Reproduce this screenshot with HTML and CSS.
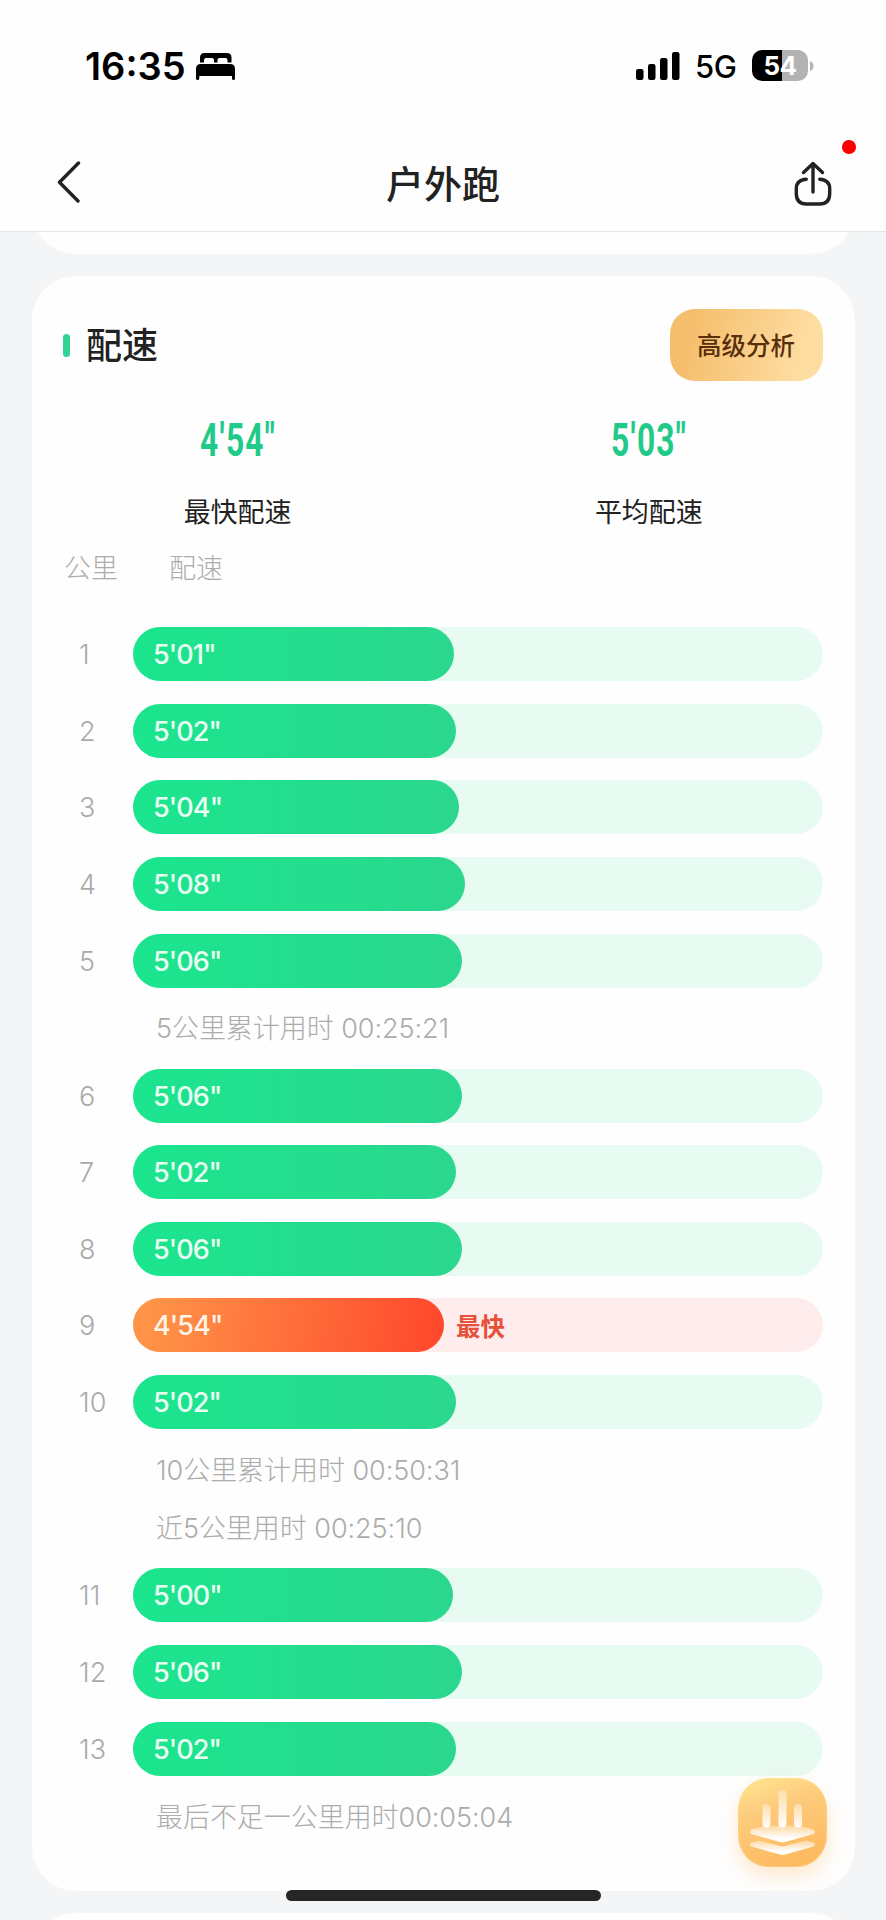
FILE: index.html
```html
<!DOCTYPE html>
<html lang="zh-CN">
<head>
<meta charset="utf-8">
<title>户外跑</title>
<link rel="stylesheet" href="styles.css">
</head>
<body>
<div class="screen">
  <header class="top">
    <div class="status">
      <span class="time">16:35</span>
      <svg class="bed" viewBox="0 0 39 27" width="39" height="27"><path d="M4 9.500V4.500Q4 0 8.500 0H31Q35.500 0 35.500 4.500V9.500H31.500V7Q31.500 5 29.500 5H23.500Q21.500 5 21.500 7V9.500H18V7Q18 5 16 5H10Q8 5 8 7V9.500Z"/><path d="M5 11H34Q39 11 39 16V25.500Q39 27 37.500 27Q36 27 36 25.500V23H3.300V25.500Q3.300 27 1.700 27Q0 27 0 25.500V16Q0 11 5 11Z"/></svg>
      <svg class="signal" viewBox="0 0 44 28" width="44" height="28"><rect x="0" y="17" width="7.500" height="11" rx="2.200"/><rect x="12" y="12" width="7.500" height="16" rx="2.200"/><rect x="24" y="6" width="7.500" height="22" rx="2.200"/><rect x="36" y="0" width="7.500" height="28" rx="2.200"/></svg>
      <span class="net">5G</span>
      <span class="battery">54</span>
      <svg class="nub" viewBox="0 0 4 10" width="4" height="10"><path d="M0 0Q3.500 1.500 3.500 5T0 10Z"/></svg>
    </div>
    <nav class="nav">
      <svg class="back" viewBox="0 0 24 42" width="24" height="42"><path d="M21.500 2L2.500 21.200L21 40"/></svg>
      <h1 class="title">户外跑</h1>
      <div class="share">
        <svg viewBox="0 0 38 46" width="38" height="46"><path d="M19 31V3M9.500 11.500L19 2.500L28.500 11.500M12.300 18.200C6 18.700 2.300 22 2.300 27.500V32.500Q2.300 43 12.500 43H25.500Q35.700 43 35.700 32.500V27.500C35.700 22 32 18.700 25.700 18.200"/></svg>
        <i class="dot"></i>
      </div>
    </nav>
  </header>
  <main class="content">
    <section class="card previous"></section>
    <section class="card pace">
      <div class="head">
        <i class="mark"></i><h2 class="heading">配速</h2><button class="analysis">高级分析</button>
      </div>
      <div class="stats">
        <div class="stat"><b class="value">4'54"</b><span class="label">最快配速</span></div>
        <div class="stat"><b class="value">5'03"</b><span class="label">平均配速</span></div>
      </div>
      <div class="columns"><span class="km">公里</span><span>配速</span></div>
      <div class="list">
        <div class="row"><span class="num">1</span><div class="track"><div class="fill" style="width:321.5px">5'01"</div></div></div>
        <div class="row"><span class="num">2</span><div class="track"><div class="fill" style="width:323px">5'02"</div></div></div>
        <div class="row"><span class="num">3</span><div class="track"><div class="fill" style="width:326px">5'04"</div></div></div>
        <div class="row"><span class="num">4</span><div class="track"><div class="fill" style="width:332px">5'08"</div></div></div>
        <div class="row"><span class="num">5</span><div class="track"><div class="fill" style="width:329px">5'06"</div></div></div>
        <p class="note">5公里累计用时 00:25:21</p>
        <div class="row"><span class="num">6</span><div class="track"><div class="fill" style="width:329px">5'06"</div></div></div>
        <div class="row"><span class="num">7</span><div class="track"><div class="fill" style="width:323px">5'02"</div></div></div>
        <div class="row"><span class="num">8</span><div class="track"><div class="fill" style="width:329px">5'06"</div></div></div>
        <div class="row fastest"><span class="num">9</span><div class="track"><div class="fill" style="width:311px">4'54"</div><span class="tag">最快</span></div></div>
        <div class="row"><span class="num">10</span><div class="track"><div class="fill" style="width:323px">5'02"</div></div></div>
        <p class="note">10公里累计用时 00:50:31</p>
        <p class="note">近5公里用时 00:25:10</p>
        <div class="row"><span class="num">11</span><div class="track"><div class="fill" style="width:320px">5'00"</div></div></div>
        <div class="row"><span class="num">12</span><div class="track"><div class="fill" style="width:329px">5'06"</div></div></div>
        <div class="row"><span class="num">13</span><div class="track"><div class="fill" style="width:323px">5'02"</div></div></div>
        <p class="note">最后不足一公里用时00:05:04</p>
      </div>
    </section>
    <section class="card next"></section>
  </main>
  <div class="fab">
    <svg viewBox="0 0 89 89" width="89" height="89">
      <defs>
        <linearGradient id="stick" x1="0" y1="0" x2="0" y2="1"><stop offset="0" stop-color="#fff" stop-opacity=".35"/><stop offset="1" stop-color="#fff"/></linearGradient>
        <linearGradient id="layer" x1="0" y1="0" x2="0" y2="1"><stop offset="0" stop-color="#fff" stop-opacity=".35"/><stop offset=".75" stop-color="#fff"/></linearGradient>
      </defs>
      <path fill="url(#layer)" d="M13.500 64.500L21 62.500L42 68Q44.500 68.700 47 68L68 62.500L75.500 64.500Q78.500 66.500 75.500 68.500L47 76.500Q44.500 77.300 42 76.500L13.500 68.500Q10.500 66.500 13.500 64.500Z"/>
      <path fill="url(#layer)" d="M13.500 51.500L26 48H63L75.500 51.500Q78.500 54 75.500 56L47 64Q44.500 64.800 42 64L13.500 56Q10.500 54 13.500 51.500Z"/>
      <rect x="24.500" y="26" width="8" height="23.500" rx="4" fill="url(#stick)"/>
      <rect x="40.500" y="12" width="8" height="37.500" rx="4" fill="url(#stick)"/>
      <rect x="56" y="26" width="8" height="23.500" rx="4" fill="url(#stick)"/>
    </svg>
  </div>
  <div class="home"></div>
</div>
</body>
</html>
```
FILE: styles.css
```css
* { box-sizing: border-box; }
body { margin: 0; }
h1, h2, p { margin: 0; font-weight: 500; }

.screen {
  position: relative;
  width: 886px;
  height: 1920px;
  overflow: hidden;
  background: #f3f5f7;
  font-family: Inter, "Noto Sans CJK SC", sans-serif;
  color: #222;
}

.top {
  height: 232px;
  background: #fefefe;
  border-bottom: 1px solid #e3e5e6;
}
.status {
  display: flex;
  align-items: center;
  height: 132px;
  padding-left: 85px;
  color: #000;
}
.time { width: 111px; font-size: 38px; font-weight: 600; }
.signal { margin-left: 401px; }
.net { width: 57px; margin-left: 15px; font-size: 31px; font-weight: 450; letter-spacing: -.5px; }
.battery {
  width: 56px;
  height: 31px;
  margin-top: -1px;
  border-radius: 10px;
  background: linear-gradient(90deg, #000 30.5px, #b3b3b3 30.5px);
  color: #fff;
  font-size: 26px;
  font-weight: 700;
  line-height: 31px;
  text-align: center;
  letter-spacing: -.5px;
}
.nub { margin-left: 2px; fill: #b3b3b3; }

.nav {
  display: flex;
  align-items: center;
  justify-content: space-between;
  height: 99px;
  padding: 4px 54px 0 57px;
}
.back, .share svg { display: block; fill: none; stroke: #222; stroke-width: 3.4; stroke-linecap: round; stroke-linejoin: round; }
.back { margin-top: -4px; }
.title { padding: 1px 0 0 11px; font-size: 38px; line-height: 50px; }
.share { position: relative; }
.dot { position: absolute; top: -20.500px; right: -24px; width: 13.500px; height: 13.500px; border-radius: 50%; background: #fa0000; }

.content { display: flex; flex-direction: column; gap: 22px; padding: 0 31.500px 0 32px; }
.card { flex: none; border-radius: 44px; background: #fefefe; }
.previous { height: 100px; margin-top: -78px; clip-path: inset(78px 0 0 0); }
.next { height: 100px; }
.pace { height: 1615px; padding-top: 33px; }

.head { display: flex; align-items: center; height: 72px; padding: 0 32px 0 31px; }
.mark { width: 7px; height: 23px; border-radius: 3.5px; background: #2fd393; }
.heading { margin-left: 16px; padding-top: 1px; font-size: 36px; line-height: 50px; }
.analysis {
  width: 153px;
  height: 72px;
  margin-left: auto;
  padding: 0 0 2px;
  border: 0;
  border-radius: 25px;
  background: linear-gradient(105deg, #f5be6d 15%, #fedda1 85%);
  color: #582f0c;
  font: 500 24.5px "Noto Sans CJK SC", sans-serif;
}

.stats { display: flex; height: 155px; }
.stat { flex: 1; display: flex; flex-direction: column; align-items: center; }
.value {
  margin-top: 31px;
  transform: scaleX(.69);
  color: #22ca89;
  font: 700 46px/56px Roboto, sans-serif;
  letter-spacing: 1.8px;
}
.label { margin-top: 26px; font-size: 27px; line-height: 38px; font-weight: 400; }

.columns { display: flex; gap: 51px; height: 79.6px; padding: 14px 32px 0; color: #acacac; font-size: 27px; font-weight: 300; line-height: 38px; }

.row { display: flex; align-items: center; height: 76.67px; padding: 0 32px 0 47px; }
.num { width: 54px; padding-top: 1px; color: #aaa; font-size: 27px; font-weight: 300; }
.track { display: flex; align-items: center; width: 690px; height: 54px; border-radius: 27px; background: #e8fbf2; }
.fill {
  height: 54px;
  padding: 1px 0 0 20px;
  border-radius: 27px;
  background: linear-gradient(90deg, #1be58e, #2bd78e);
  color: #e9fff3;
  font-size: 27px;
  font-weight: 550;
  line-height: 54px;
  letter-spacing: -.9px;
}
.fastest .track { background: #ffecec; }
.fastest .fill { background: linear-gradient(100deg, #ff9448 5%, #ff4a2d 95%); color: #fff5ea; }
.tag { margin-left: 12px; color: #e5513a; font-size: 24.5px; font-weight: 700; }
.note { height: 58.3px; padding: 1.500px 0 0 124px; color: #acacac; font-size: 27px; font-weight: 300; line-height: 58.2px; white-space: nowrap; letter-spacing: -.05px; }

.fab {
  position: absolute;
  left: 738px;
  top: 1778px;
  width: 89px;
  height: 89px;
  border-radius: 31px;
  background: linear-gradient(160deg, #ffe794 0%, #fdcb7c 35%, #fdb65a 100%);
  box-shadow: 0 10px 20px rgba(255, 178, 90, .28), inset 0 0 3px rgba(255, 226, 150, .8);
}
.home { position: absolute; left: 286px; top: 1890px; width: 315px; height: 11px; border-radius: 6px; background: #262626; }
```
